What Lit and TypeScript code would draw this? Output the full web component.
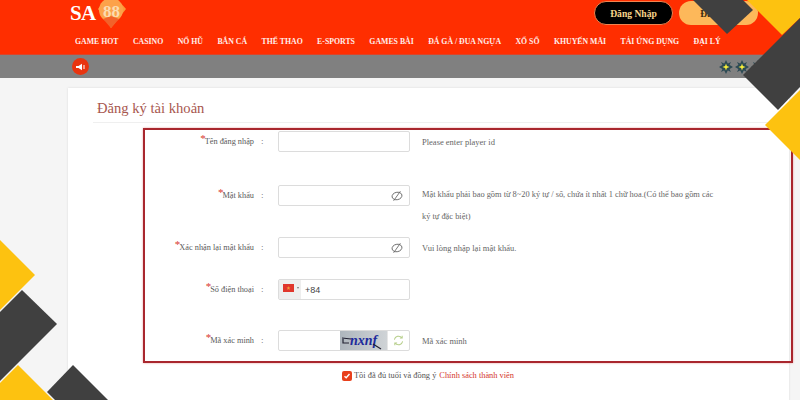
import { LitElement, html, css, svg } from "lit";
import { customElement } from "lit/decorators.js";

const NAV = ["GAME HOT","CASINO","NỔ HŨ","BẮN CÁ","THỂ THAO","E-SPORTS","GAMES BÀI","ĐÁ GÀ / ĐUA NGỰA","XỔ SỐ","KHUYẾN MÃI","TẢI ỨNG DỤNG","ĐẠI LÝ"];

const eye = html`<svg class="eye" viewBox="0 0 12 12" width="12" height="12" fill="none" stroke="#6a6a6a" stroke-width=".9">
  <ellipse cx="6" cy="6" rx="5" ry="3.7" transform="rotate(-12 6 6)"/><path d="M2.6 10.8 L9.4 1.2"/></svg>`;

const star = html`<svg viewBox="0 0 14 14" width="14" height="14">
  <path d="M7 0 9 4 14 7 9 10 7 14 5 10 0 7 5 4Z" fill="#2c4a55"/>
  <path d="M2 2 7 4.5 12 2 9.5 7 12 12 7 9.5 2 12 4.5 7Z" fill="#2c4a55"/>
  <path d="M7 3.4 7.9 6.1 10.6 7 7.9 7.9 7 10.6 6.1 7.9 3.4 7 6.1 6.1Z" fill="#f6ee3a"/></svg>`;

@customElement("app-root")
export class AppRoot extends LitElement {
  static styles = css`
    :host { display: block; font-family: "Liberation Serif", serif; }
    .page { position: relative; width: 800px; height: 400px; overflow: hidden; background: #f5f5f5; }
    .head { height: 54px; background: #ff2e00; border-bottom: 1px solid #d9452a; display: flex; flex-direction: column; }
    .top { height: 27px; padding: 1px 42px 0 70px; display: flex; align-items: flex-start; }
    .logo { display: flex; align-items: flex-start; }
    .sa { font-size: 21px; font-weight: bold; color: #fff; line-height: 22px; letter-spacing: -.6px; margin-top: 1px; }
    .logo svg { margin-top: -1px; }
    .logo-num { font: bold 17px "Liberation Serif", serif; fill: #fbdcb0; }
    .btns { margin-left: auto; display: flex; gap: 6px; }
    .btn { width: 79px; height: 24px; box-sizing: border-box; border-radius: 12px; display: flex; align-items: center; justify-content: center; font-size: 9.6px; font-weight: bold; }
    .login { background: #000; border: 1px solid #f0834f; color: #f7d48b; }
    .reg { background: #fdb85a; color: #3a2a10; }
    .nav { display: flex; gap: 14.4px; padding: 7px 0 0 75px; color: #fff; font-size: 7.8px; font-weight: bold; line-height: 14px; white-space: nowrap; opacity: .92; }
    .bar { height: 23px; background: #808080; display: flex; align-items: center; padding: 0 0 0 72px; }
    .horn { width: 17px; height: 17px; border-radius: 50%; background: #e8340f; display: flex; align-items: center; justify-content: center; }
    .stars { margin-left: auto; display: flex; gap: 2px; padding-right: 35px; }
    .card { margin: 10px 11px 0 68px; height: 330px; background: #fff; box-shadow: 0 0 2px #d8d8d8; padding: 0 0 0 25px; position: relative; }
    .title { margin: 0 9px 0 0; height: 35px; box-sizing: border-box; padding: 10px 0 0 4px; font-size: 14.6px; line-height: 20px; font-weight: normal; color: #a8584f; border-bottom: 1px solid #efefef; }
    .form { margin: 5px -4px 0 50px; border: 2px solid #a9272e; box-shadow: 0 0 2px #e8a0a0; padding: 1px 0 10px; display: grid;
      grid-template-columns: 109px 24px 132px 1fr; grid-template-rows: 54px 52px 42px 51px 21px; color: #555; }
    .label { font-size: 8.3px; line-height: 21px; height: 21px; text-align: right; white-space: nowrap; color: #5a5a5a; }
    .label::before { content: "*"; color: #d9362c; font-size: 11px; line-height: 0; vertical-align: 2px; margin-right: -1px; }
    .colon { font-size: 9px; line-height: 21px; padding-left: 7px; color: #666; }
    .input { height: 21px; box-sizing: border-box; border: 1px solid #dcdcdc; border-radius: 2px; background: #fff; display: flex; align-items: center; justify-content: flex-end; }
    .eye { margin-right: 6px; }
    .hint { font-size: 8.5px; line-height: 22px; padding-left: 12px; color: #666; }
    .long { font-size: 8.4px; margin-top: -1px; width: 297px; }
    .phone { justify-content: flex-start; }
    .dial { width: 22px; height: 19px; background: #eee; display: flex; align-items: center; gap: 3px; padding: 0 0 4px 4px; box-sizing: border-box; }
    .caret { width: 0; height: 0; border: 1.5px solid transparent; border-top: 2px solid #777; border-bottom: 0; }
    .code { font: 9px "Liberation Sans", sans-serif; color: #444; margin-left: 4px; }
    .cap-img { width: 47px; height: 19px; background: linear-gradient(90deg,#aeb6bd,#cfd3d6); }
    .cap-btn { width: 21px; height: 19px; display: flex; align-items: center; justify-content: center; border-left: 1px solid #e6e6e6; }
    .cap-text { font: italic bold 14px "Liberation Serif", serif; fill: #1c2a9c; }
    .agree { display: flex; align-items: center; margin: 7px 0 0 249px; font-size: 8.4px; line-height: 12px; color: #555; white-space: nowrap; }
    .check { width: 10px; height: 10px; border-radius: 2px; background: #e8401c; display: flex; align-items: center; justify-content: center; margin-right: 2px; }
    .policy { color: #d4362c; margin-left: 3px; }
    .shapes { position: absolute; inset: 0; pointer-events: none; }
  `;

  render() {
    return html`<div class="page">
      <div class="head">
        <div class="top">
          <div class="logo">
            <span class="sa">SA</span>
            <svg width="31" height="29" viewBox="0 0 31 29">
              <path d="M15 -8 30 9 15 28 2 9Z" fill="#fb9a3a"/>
              <circle cx="15" cy="10" r="12" fill="#fca24a"/>
              <path d="M7 19 15 28 23 19 15 16Z" fill="#f2622a"/>
              <text class="logo-num" x="15.5" y="17" text-anchor="middle">88</text>
            </svg>
          </div>
          <div class="btns"><div class="btn login">Đăng Nhập</div><div class="btn reg">Đăng Ký</div></div>
        </div>
        <div class="nav">${NAV.map((n) => html`<span>${n}</span>`)}</div>
      </div>
      <div class="bar">
        <div class="horn"><svg width="9" height="8" viewBox="0 0 9 8" fill="#fff"><path d="M0 3h2.5L6 .8v6.4L2.5 5H0Z"/><path d="M7 2.5h2v1H7zM7 4.5h2v1H7z"/></svg></div>
        <div class="stars">${star}${star}${star}</div>
      </div>
      <div class="card">
        <h1 class="title">Đăng ký tài khoản</h1>
        <div class="form">
          <div class="label">Tên đăng nhập</div><div class="colon">:</div><div class="input"></div><div class="hint">Please enter player id</div>
          <div class="label">Mật khẩu</div><div class="colon">:</div><div class="input">${eye}</div>
          <div class="hint long">Mật khẩu phải bao gồm từ 8~20 ký tự / số, chứa ít nhất 1 chữ hoa.(Có thể bao gồm các ký tự đặc biệt)</div>
          <div class="label">Xác nhận lại mật khẩu</div><div class="colon">:</div><div class="input">${eye}</div><div class="hint">Vui lòng nhập lại mật khẩu.</div>
          <div class="label">Số điện thoại</div><div class="colon">:</div>
          <div class="input phone"><div class="dial">
            <svg width="11" height="8" viewBox="0 0 11 8"><rect width="11" height="8" fill="#e0362c"/><path d="M5.5 2 6 3.5H7.5L6.3 4.4 6.8 6 5.5 5 4.2 6 4.7 4.4 3.5 3.5H5Z" fill="#f0a03a"/></svg>
            <span class="caret"></span></div><span class="code">+84</span></div><div></div>
          <div class="label">Mã xác minh</div><div class="colon">:</div>
          <div class="input"><div class="cap-img">
            <svg width="47" height="19" viewBox="0 0 47 19">
              <text class="cap-text" x="10" y="14">nxnf</text>
              <path d="M2 7 11 8M3 8V12H9M33 13 41 18" stroke="#223" stroke-width="1.2" fill="none"/>
            </svg>
          </div><div class="cap-btn">
            <svg width="11" height="11" viewBox="0 0 12 12" fill="none" stroke="#b3cc85" stroke-width="1.1"><path d="M1.5 5A4.6 4.6 0 0 1 9.6 3M10.5 7A4.6 4.6 0 0 1 2.4 9"/><path d="M10 .8V3.3H7.5M2 11.2V8.7H4.5"/></svg>
          </div></div><div class="hint">Mã xác minh</div>
        </div>
        <div class="agree"><span class="check"><svg width="8" height="8" viewBox="0 0 8 8" fill="none" stroke="#fff" stroke-width="1.4"><path d="M1.5 4.2 3.2 5.8 6.5 2"/></svg></span>Tôi đã đủ tuổi và đồng ý<span class="policy">Chính sách thành viên</span></div>
      </div>
      <svg class="shapes" width="800" height="400" viewBox="0 0 800 400">
        ${svg`
        <polygon points="693,0 727,34 753,10 743,0" fill="#404040"/>
        <polygon points="747,0 782,35 800,18 800,0" fill="#fdc210"/>
        <polygon points="743,75 778,110 800,87 800,18" fill="#404040"/>
        <polygon points="765,125 800,90 800,160" fill="#fdc210"/>
        <polygon points="0,240 35,275 0,310" fill="#fdc210"/>
        <polygon points="0,312 22,290 57,324 0,381" fill="#404040"/>
        <polygon points="0,383 18,365 53,400 0,400" fill="#fdc210"/>
        <polygon points="47,392 73,365 108,400 55,400" fill="#404040"/>`}
      </svg>
    </div>`;
  }
}
